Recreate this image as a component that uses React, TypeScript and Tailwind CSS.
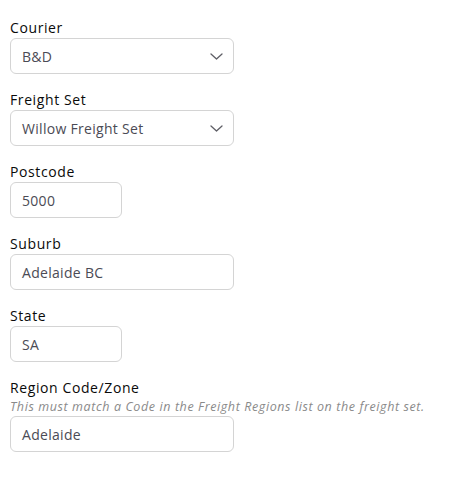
import React from "react";

const Chevron = () => (
  <svg width="13" height="7" viewBox="0 0 13 7" fill="none" className="shrink-0">
    <path d="M1 1l5.5 5 5.5-5" stroke="#5f5f66" strokeWidth="1.3" strokeLinecap="round" strokeLinejoin="round" />
  </svg>
);

const Label = ({ children }: { children: React.ReactNode }) => (
  <div className="h-5 text-[14px] leading-5 font-medium tracking-[0.6px] text-[#0a0a0a]">{children}</div>
);

const Box = ({ value, w, select }: { value: string; w: string; select?: boolean }) => (
  <div
    className={`${w} h-9 flex items-center justify-between rounded-md border border-[#d4d4d4] bg-white pl-[11px] pr-[10px] text-[14px] tracking-[0.3px] text-[#4b4b55]`}
  >
    <span>{value}</span>
    {select && <Chevron />}
  </div>
);

export default function App() {
  return (
    <div
      className="w-[451px] h-[477px] bg-white pt-[18px] pl-[10px]"
      style={{ fontFamily: "'Open Sans', 'Noto Sans', sans-serif" }}
    >
      <div className="flex flex-col gap-4">
        <div>
          <Label>Courier</Label>
          <Box value="B&D" w="w-[224px]" select />
        </div>
        <div>
          <Label>Freight Set</Label>
          <Box value="Willow Freight Set" w="w-[224px]" select />
        </div>
        <div>
          <Label>Postcode</Label>
          <Box value="5000" w="w-[112px]" />
        </div>
        <div>
          <Label>Suburb</Label>
          <Box value="Adelaide BC" w="w-[224px]" />
        </div>
        <div>
          <Label>State</Label>
          <Box value="SA" w="w-[112px]" />
        </div>
        <div>
          <Label>Region Code/Zone</Label>
          <div className="h-[18px] text-[12.5px] leading-[18px] italic tracking-[0.6px] text-[#8a8a8a] whitespace-nowrap">
            This must match a Code in the Freight Regions list on the freight set.
          </div>
          <Box value="Adelaide" w="w-[224px]" />
        </div>
      </div>
    </div>
  );
}
